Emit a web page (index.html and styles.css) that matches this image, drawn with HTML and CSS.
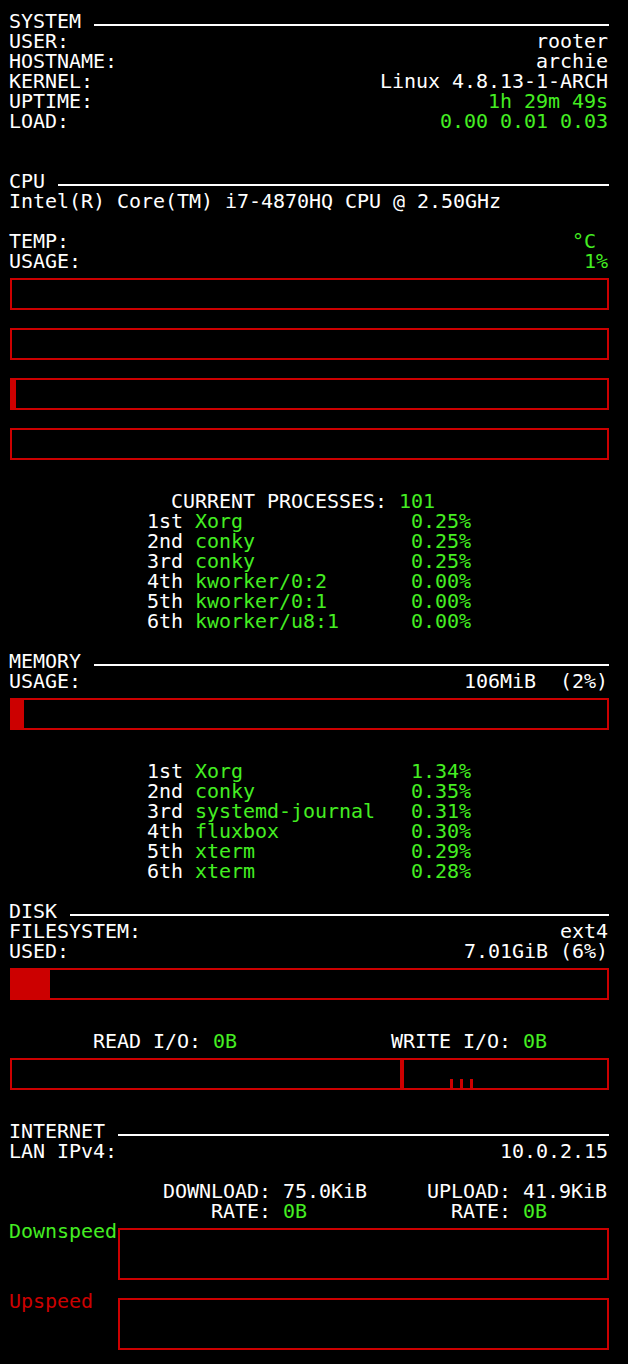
FILE: index.html
```html
<!DOCTYPE html>
<html>
<head>
<meta charset="utf-8">
<link rel="stylesheet" href="styles.css">
</head>
<body>
<div class="page">
  <section class="sec">
    <div class="hdr"><span>SYSTEM</span><span class="rule"></span></div>
    <div class="kv"><span>USER:</span><span>rooter</span></div>
    <div class="kv"><span>HOSTNAME:</span><span>archie</span></div>
    <div class="kv"><span>KERNEL:</span><span>Linux 4.8.13-1-ARCH</span></div>
    <div class="kv"><span>UPTIME:</span><span class="g">1h 29m 49s</span></div>
    <div class="kv"><span>LOAD:</span><span class="g">0.00 0.01 0.03</span></div>
  </section>

  <section class="sec gap40">
    <div class="hdr"><span>CPU</span><span class="rule"></span></div>
    <div class="row">Intel(R) Core(TM) i7-4870HQ CPU @ 2.50GHz</div>
    <div class="blank"></div>
    <div class="kv"><span>TEMP:</span><span class="g pre">°C </span></div>
    <div class="kv"><span>USAGE:</span><span class="g">1%</span></div>
    <div class="bars">
      <div class="bar"></div>
      <div class="bar"></div>
      <div class="bar"><div class="fill" style="width:4px"></div></div>
      <div class="bar"></div>
    </div>
    <div class="procs">
      <div class="row title">CURRENT PROCESSES: <span class="g">101</span></div>
      <div class="proc"><span>1st</span><span class="g">Xorg</span><span class="g">0.25%</span></div>
      <div class="proc"><span>2nd</span><span class="g">conky</span><span class="g">0.25%</span></div>
      <div class="proc"><span>3rd</span><span class="g">conky</span><span class="g">0.25%</span></div>
      <div class="proc"><span>4th</span><span class="g">kworker/0:2</span><span class="g">0.00%</span></div>
      <div class="proc"><span>5th</span><span class="g">kworker/0:1</span><span class="g">0.00%</span></div>
      <div class="proc"><span>6th</span><span class="g">kworker/u8:1</span><span class="g">0.00%</span></div>
    </div>
  </section>

  <section class="sec gap20">
    <div class="hdr"><span>MEMORY</span><span class="rule"></span></div>
    <div class="kv"><span>USAGE:</span><span class="pre">106MiB  (2%)</span></div>
    <div class="bars">
      <div class="bar"><div class="fill" style="width:12px"></div></div>
    </div>
    <div class="procs">
      <div class="proc"><span>1st</span><span class="g">Xorg</span><span class="g">1.34%</span></div>
      <div class="proc"><span>2nd</span><span class="g">conky</span><span class="g">0.35%</span></div>
      <div class="proc"><span>3rd</span><span class="g">systemd-journal</span><span class="g">0.31%</span></div>
      <div class="proc"><span>4th</span><span class="g">fluxbox</span><span class="g">0.30%</span></div>
      <div class="proc"><span>5th</span><span class="g">xterm</span><span class="g">0.29%</span></div>
      <div class="proc"><span>6th</span><span class="g">xterm</span><span class="g">0.28%</span></div>
    </div>
  </section>

  <section class="sec gap20">
    <div class="hdr"><span>DISK</span><span class="rule"></span></div>
    <div class="kv"><span>FILESYSTEM:</span><span>ext4</span></div>
    <div class="kv"><span>USED:</span><span>7.01GiB (6%)</span></div>
    <div class="bars">
      <div class="bar"><div class="fill" style="width:38px"></div></div>
    </div>
    <div class="io-labels">
      <div class="io-read">READ I/O: <span class="g">0B</span></div>
      <div>WRITE I/O: <span class="g">0B</span></div>
    </div>
    <div class="io-bars">
      <div class="iobox left"></div>
      <div class="iobox right">
        <span class="tick"></span><span class="tick"></span><span class="tick"></span>
      </div>
    </div>
  </section>

  <section class="sec gap31">
    <div class="hdr"><span>INTERNET</span><span class="rule"></span></div>
    <div class="kv"><span>LAN IPv4:</span><span>10.0.2.15</span></div>
    <div class="blank"></div>
    <div class="net">
      <span class="lbl">DOWNLOAD:</span><span class="val">75.0KiB</span>
      <span class="lbl">UPLOAD:</span><span class="val">41.9KiB</span>
      <span class="lbl">RATE:</span><span class="val g">0B</span>
      <span class="lbl">RATE:</span><span class="val g">0B</span>
    </div>
    <div class="graph-row">
      <span class="glabel g">Downspeed</span>
      <div class="graph"></div>
    </div>
    <div class="graph-row up">
      <span class="glabel r">Upspeed</span>
      <div class="graph"></div>
    </div>
  </section>
</div>
</body>
</html>
```

FILE: styles.css
```css
html, body {
  margin: 0;
  padding: 0;
  background: #000;
}

body {
  color: #ffffff;
  font-family: "DejaVu Sans Mono", "Liberation Mono", monospace;
  font-size: 20px;
  line-height: 20px;
  letter-spacing: -0.04px;
  width: 628px;
  height: 1364px;
  overflow: hidden;
}

.page {
  padding: 11px 19px 0 9px;
}

.g { color: #44ee22; }
.r { color: #cc0000; }
.pre { white-space: pre; }

.gap40 { margin-top: 40px; }
.gap20 { margin-top: 20px; }
.gap31 { margin-top: 31px; }

.hdr {
  display: flex;
  height: 20px;
}

.rule {
  flex: 1;
  height: 2px;
  background: #fff;
  margin: 13px 0 0 13px;
}

.kv {
  display: flex;
  justify-content: space-between;
  height: 20px;
  white-space: pre;
}

.kv > span:last-child {
  padding-right: 1px;
}

.row {
  height: 20px;
  white-space: pre;
}

.blank { height: 20px; }

.bars {
  display: flex;
  flex-direction: column;
  gap: 18px;
  margin: 7px 0 0 1px;
}

.bar {
  height: 32px;
  border: 2px solid #cc0000;
  box-sizing: border-box;
  display: flex;
}

.fill {
  height: 100%;
  background: #cc0000;
}

.procs {
  margin: 31px 0 0 138px;
  width: 324px;
}

.title {
  padding-left: 24px;
}

.proc {
  display: grid;
  grid-template-columns: 48px 1fr auto;
  height: 20px;
  white-space: pre;
}

.io-labels {
  display: grid;
  grid-template-columns: 382px 1fr;
  margin-top: 31px;
  height: 20px;
  white-space: pre;
}

.io-read {
  padding-left: 84px;
}

.io-bars {
  display: flex;
  margin: 7px 0 0 1px;
  height: 32px;
}

.iobox {
  border: 2px solid #cc0000;
  box-sizing: border-box;
  height: 32px;
}

.iobox.left { width: 392px; }

.iobox.right {
  flex: 1;
  display: flex;
  align-items: flex-end;
  gap: 7px;
  padding-left: 46px;
}

.tick {
  width: 3px;
  height: 9px;
  background: #cc0000;
}

.net {
  display: grid;
  grid-template-columns: 262px 120px 120px 1fr;
  grid-auto-rows: 20px;
  white-space: pre;
}

.net .lbl:nth-of-type(odd) { text-align: right; }
.net .lbl { text-align: right; }
.net .val { padding-left: 12px; }

.graph-row {
  display: flex;
  align-items: flex-start;
}

.graph-row.up {
  margin-top: 11px;
}

.glabel {
  width: 109px;
  height: 20px;
  white-space: pre;
}

.graph {
  flex: 1;
  height: 52px;
  margin-top: 7px;
  border: 2px solid #cc0000;
  box-sizing: border-box;
}
```
